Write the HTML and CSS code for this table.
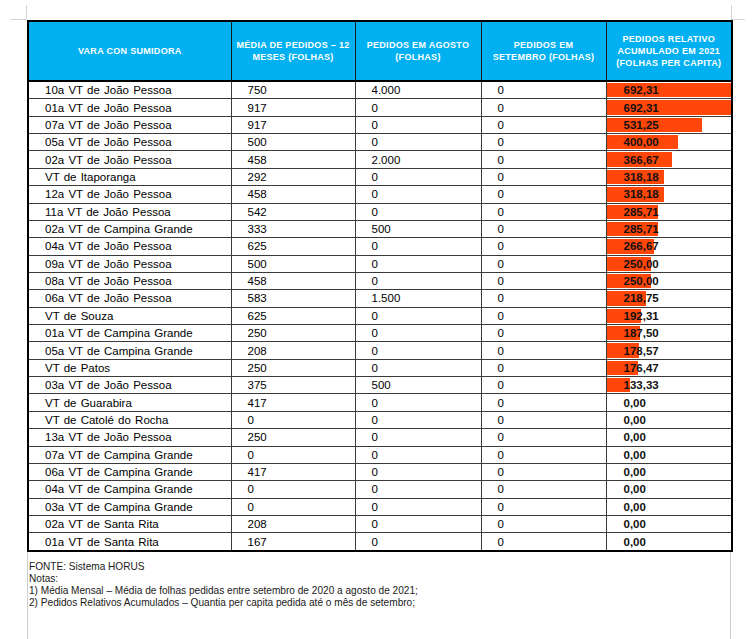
FILE: index.html
```html
<!DOCTYPE html>
<html lang="pt">
<head>
<meta charset="utf-8">
<title>Pedidos por Vara</title>
<link rel="stylesheet" href="styles.css">
</head>
<body>
<div class="page">
  <div class="marks">
    <div class="mark mark-left"></div>
    <div class="mark mark-right"></div>
  </div>
  <table class="grid">
    <colgroup>
      <col class="c1"><col class="c2"><col class="c3"><col class="c4"><col class="c5">
    </colgroup>
    <thead>
      <tr>
        <th>VARA CON SUMIDORA</th>
        <th>MÉDIA DE PEDIDOS – 12<br>MESES (FOLHAS)</th>
        <th>PEDIDOS EM AGOSTO<br>(FOLHAS)</th>
        <th>PEDIDOS EM<br>SETEMBRO (FOLHAS)</th>
        <th>PEDIDOS RELATIVO<br>ACUMULADO EM 2021<br>(FOLHAS PER CAPITA)</th>
      </tr>
    </thead>
    <tbody>
      <tr><td>10a VT de João Pessoa</td><td>750</td><td>4.000</td><td>0</td><td class="rel"><span class="bar" style="width:100%"></span><span class="val">692,31</span></td></tr>
      <tr><td>01a VT de João Pessoa</td><td>917</td><td>0</td><td>0</td><td class="rel"><span class="bar" style="width:100%"></span><span class="val">692,31</span></td></tr>
      <tr><td>07a VT de João Pessoa</td><td>917</td><td>0</td><td>0</td><td class="rel"><span class="bar" style="width:76.74%"></span><span class="val">531,25</span></td></tr>
      <tr><td>05a VT de João Pessoa</td><td>500</td><td>0</td><td>0</td><td class="rel"><span class="bar" style="width:57.78%"></span><span class="val">400,00</span></td></tr>
      <tr><td>02a VT de João Pessoa</td><td>458</td><td>2.000</td><td>0</td><td class="rel"><span class="bar" style="width:52.96%"></span><span class="val">366,67</span></td></tr>
      <tr><td>VT de Itaporanga</td><td>292</td><td>0</td><td>0</td><td class="rel"><span class="bar" style="width:45.96%"></span><span class="val">318,18</span></td></tr>
      <tr><td>12a VT de João Pessoa</td><td>458</td><td>0</td><td>0</td><td class="rel"><span class="bar" style="width:45.96%"></span><span class="val">318,18</span></td></tr>
      <tr><td>11a VT de João Pessoa</td><td>542</td><td>0</td><td>0</td><td class="rel"><span class="bar" style="width:41.27%"></span><span class="val">285,71</span></td></tr>
      <tr><td>02a VT de Campina Grande</td><td>333</td><td>500</td><td>0</td><td class="rel"><span class="bar" style="width:41.27%"></span><span class="val">285,71</span></td></tr>
      <tr><td>04a VT de João Pessoa</td><td>625</td><td>0</td><td>0</td><td class="rel"><span class="bar" style="width:38.52%"></span><span class="val">266,67</span></td></tr>
      <tr><td>09a VT de João Pessoa</td><td>500</td><td>0</td><td>0</td><td class="rel"><span class="bar" style="width:36.11%"></span><span class="val">250,00</span></td></tr>
      <tr><td>08a VT de João Pessoa</td><td>458</td><td>0</td><td>0</td><td class="rel"><span class="bar" style="width:36.11%"></span><span class="val">250,00</span></td></tr>
      <tr><td>06a VT de João Pessoa</td><td>583</td><td>1.500</td><td>0</td><td class="rel"><span class="bar" style="width:31.60%"></span><span class="val">218,75</span></td></tr>
      <tr><td>VT de Souza</td><td>625</td><td>0</td><td>0</td><td class="rel"><span class="bar" style="width:27.78%"></span><span class="val">192,31</span></td></tr>
      <tr><td>01a VT de Campina Grande</td><td>250</td><td>0</td><td>0</td><td class="rel"><span class="bar" style="width:27.08%"></span><span class="val">187,50</span></td></tr>
      <tr><td>05a VT de Campina Grande</td><td>208</td><td>0</td><td>0</td><td class="rel"><span class="bar" style="width:25.79%"></span><span class="val">178,57</span></td></tr>
      <tr><td>VT de Patos</td><td>250</td><td>0</td><td>0</td><td class="rel"><span class="bar" style="width:25.49%"></span><span class="val">176,47</span></td></tr>
      <tr><td>03a VT de João Pessoa</td><td>375</td><td>500</td><td>0</td><td class="rel"><span class="bar" style="width:19.26%"></span><span class="val">133,33</span></td></tr>
      <tr><td>VT de Guarabira</td><td>417</td><td>0</td><td>0</td><td class="rel"><span class="val">0,00</span></td></tr>
      <tr><td>VT de Catolé do Rocha</td><td>0</td><td>0</td><td>0</td><td class="rel"><span class="val">0,00</span></td></tr>
      <tr><td>13a VT de João Pessoa</td><td>250</td><td>0</td><td>0</td><td class="rel"><span class="val">0,00</span></td></tr>
      <tr><td>07a VT de Campina Grande</td><td>0</td><td>0</td><td>0</td><td class="rel"><span class="val">0,00</span></td></tr>
      <tr><td>06a VT de Campina Grande</td><td>417</td><td>0</td><td>0</td><td class="rel"><span class="val">0,00</span></td></tr>
      <tr><td>04a VT de Campina Grande</td><td>0</td><td>0</td><td>0</td><td class="rel"><span class="val">0,00</span></td></tr>
      <tr><td>03a VT de Campina Grande</td><td>0</td><td>0</td><td>0</td><td class="rel"><span class="val">0,00</span></td></tr>
      <tr><td>02a VT de Santa Rita</td><td>208</td><td>0</td><td>0</td><td class="rel"><span class="val">0,00</span></td></tr>
      <tr><td>01a VT de Santa Rita</td><td>167</td><td>0</td><td>0</td><td class="rel"><span class="val">0,00</span></td></tr>
    </tbody>
  </table>
  <div class="notes">
    <p>FONTE: Sistema HORUS</p>
    <p>Notas:</p>
    <p>1) Média Mensal – Média de folhas pedidas entre setembro de 2020 a agosto de 2021;</p>
    <p>2) Pedidos Relativos Acumulados – Quantia per capita pedida até o mês de setembro;</p>
  </div>
</div>
</body>
</html>
```

FILE: styles.css
```css
html, body {
  margin: 0;
  padding: 0;
  background: #ffffff;
}

body {
  font-family: "Liberation Sans", Arial, sans-serif;
  color: #000;
}

.page {
  width: 756px;
  height: 639px;
  display: flex;
  flex-direction: column;
  overflow: hidden;
}

.marks {
  display: flex;
  justify-content: space-between;
  height: 20px;
  padding: 0 11px 0 10px;
}

.mark {
  box-sizing: border-box;
  width: 17px;
  height: 15px;
  margin-top: 5px;
  border-bottom: 1px solid #d4d4d4;
}

.mark-left {
  border-right: 1px solid #d4d4d4;
}

.mark-right {
  width: 14px;
  border-left: 1px solid #d4d4d4;
}

.grid {
  margin-left: 27px;
  width: 704px;
  border-collapse: collapse;
  table-layout: fixed;
  border: 2px solid #000;
}

.c1 { width: 203px; }
.c2 { width: 124px; }
.c3 { width: 126px; }
.c4 { width: 125px; }
.c5 { width: 126px; }

.grid th {
  background: #00b0f0;
  color: #fff;
  font-size: 9px;
  font-weight: bold;
  letter-spacing: 0.3px;
  line-height: 12px;
  height: 58px;
  padding: 0 2px;
  text-align: center;
  vertical-align: middle;
  border: 1px solid #1a1a1a;
  border-bottom: 2px solid #000;
}

.grid td {
  height: 16.36px;
  padding: 0 0 0 16px;
  font-size: 11.5px;
  line-height: 14px;
  border: 1px solid #3a3a3a;
  white-space: nowrap;
  vertical-align: middle;
}

.grid td:first-child {
  padding-left: 16px;
  word-spacing: 1px;
}

.grid td.rel {
  position: relative;
  padding-left: 17px;
  font-weight: bold;
}

.bar {
  position: absolute;
  left: 0;
  top: 1px;
  bottom: 1px;
  background: #ff4709;
}

.val {
  position: relative;
  color: #111;
}

.notes {
  flex: 1;
  margin-left: 27px;
  width: 704px;
  box-sizing: border-box;
  border-left: 1px solid #cfcfcf;
  border-right: 1px solid #cfcfcf;
  padding: 9px 0 0 1px;
  font-size: 10.1px;
  line-height: 12px;
  color: #1a1a1a;
}

.notes p {
  margin: 0;
}
```
